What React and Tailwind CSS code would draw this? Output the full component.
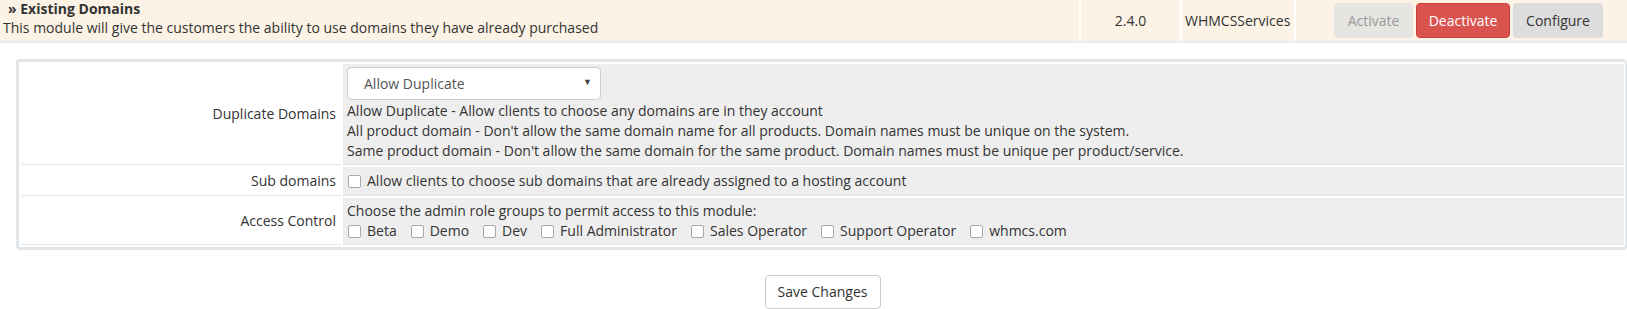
import React from "react";

const roles = [
  "Beta",
  "Demo",
  "Dev",
  "Full Administrator",
  "Sales Operator",
  "Support Operator",
  "whmcs.com",
];

function Check() {
  return (
    <input
      type="checkbox"
      className="appearance-none w-[13px] h-[13px] shrink-0 rounded-[2px] border border-[#a9a9a9] bg-white"
    />
  );
}

export default function App() {
  return (
    <div className="w-[1627px] h-[309px] overflow-hidden bg-white font-['Open_Sans',sans-serif] text-[14px] leading-[20px] text-[#333]">
      {/* Module row */}
      <div className="flex h-[43px] bg-[#fcf3e6] border-b-2 border-[#ececec]">
        <div className="flex-1 pl-[3px] pt-[-1px]">
          <div className="font-bold pl-[5px] leading-[18px]">» Existing Domains</div>
          <div className="leading-[20px] mt-[0px]">
            This module will give the customers the ability to use domains they have already purchased
          </div>
        </div>
        <div className="w-[101px] border-l-2 border-white flex items-center justify-center">
          2.4.0
        </div>
        <div className="w-[114px] border-l-2 border-white flex items-center pl-[3px]">
          WHMCSServices
        </div>
        <div className="w-[333px] border-l-2 border-white flex items-center pl-[38px] gap-[3px]">
          <button className="h-[35px] w-[79px] rounded-[4px] bg-[#e7e5e2] text-[#999]">
            Activate
          </button>
          <button className="h-[35px] w-[94px] rounded-[4px] bg-[#d9534f] border border-[#d43f3a] text-white">
            Deactivate
          </button>
          <button className="h-[35px] w-[90px] rounded-[4px] bg-[#dddddd] text-[#333]">
            Configure
          </button>
        </div>
      </div>

      {/* Config panel */}
      <div className="ml-[16px] mt-[16px] border-[3px] border-r-[2px] border-[#e1e6ea] rounded-[4px] p-[2px] pr-[1px]">
        <div className="grid grid-cols-[320px_1fr] gap-[2px]">
          <div className="flex items-center justify-end pr-[5px] border-b border-[#e6e6e6]">
            Duplicate Domains
          </div>
          <div className="bg-[#eeeeee] border-b border-[#e3e3e3] px-[4px] py-[3px]">
            <div className="relative w-[254px] h-[33px] bg-white border border-[#cccccc] rounded-[4px] flex items-center pl-[16px] text-[#555]">
              Allow Duplicate
              <span className="absolute right-[8px] top-[9px] text-[9px] leading-[10px] text-[#444]">▼</span>
            </div>
            <div className="mt-[1px]">Allow Duplicate - Allow clients to choose any domains are in they account</div>
            <div>All product domain - Don't allow the same domain name for all products. Domain names must be unique on the system.</div>
            <div>Same product domain - Don't allow the same domain for the same product. Domain names must be unique per product/service.</div>
          </div>

          <div className="flex items-center justify-end pr-[5px] border-b border-[#e6e6e6]">
            Sub domains
          </div>
          <div className="bg-[#eeeeee] border-b border-[#e3e3e3] px-[5px] py-[4px] flex items-center gap-[6px]">
            <Check />
            <span>Allow clients to choose sub domains that are already assigned to a hosting account</span>
          </div>

          <div className="flex items-center justify-end pr-[5px] border-b border-[#e6e6e6]">
            Access Control
          </div>
          <div className="bg-[#eeeeee] border-b border-[#e3e3e3] px-[4px] py-[3px]">
            <div>Choose the admin role groups to permit access to this module:</div>
            <div className="flex items-center gap-[14px] pl-[1px]">
              {roles.map((r) => (
                <label key={r} className="flex items-center gap-[6px]">
                  <Check />
                  <span>{r}</span>
                </label>
              ))}
            </div>
          </div>
        </div>
      </div>

      {/* Save */}
      <div className="flex justify-center pl-[18px] mt-[25px]">
        <button className="h-[34px] w-[116px] rounded-[4px] border border-[#cccccc] bg-white text-[#333]">
          Save Changes
        </button>
      </div>
    </div>
  );
}
